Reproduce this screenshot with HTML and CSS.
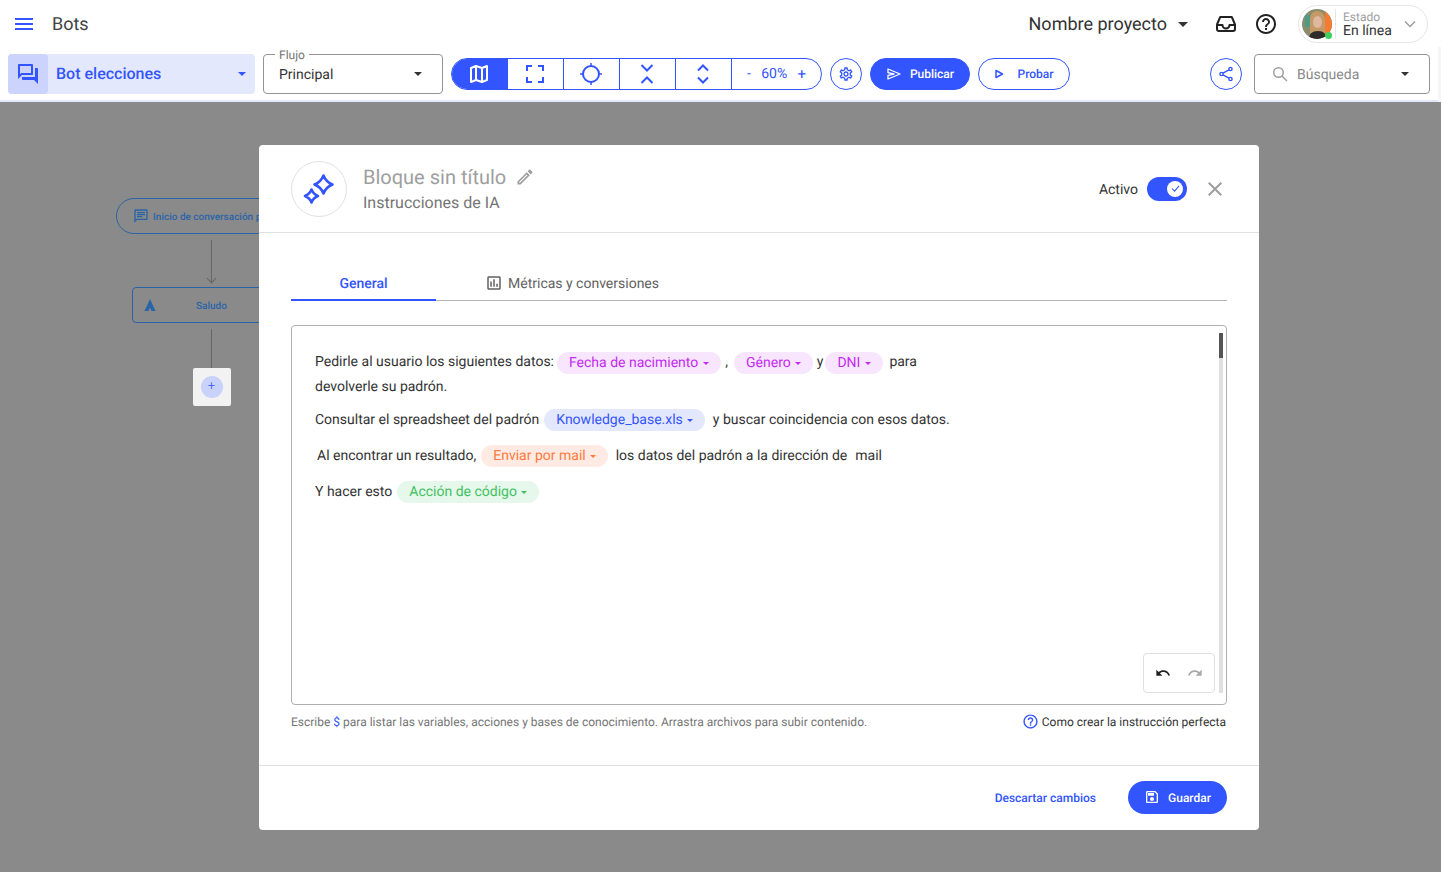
FILE: index.html
```html
<!DOCTYPE html>
<html lang="es">
<head>
    <meta charset="UTF-8" />
    <meta name="viewport" content="width=device-width, initial-scale=1" />
    <title>Bots - Bloque sin título</title>
    <link rel="stylesheet" href="styles.css">
</head>
<body>
<div class="topbar">
    <svg class="menu-icon" width="18" height="12" viewBox="0 0 18 12"><path d="M0 0h18v2H0zM0 5h18v2H0zM0 10h18v2H0z"/></svg>
    <div class="page-title">Bots</div>
    <div class="project">Nombre proyecto</div>
    <span class="caret project-caret"></span>
    <svg class="top-icon inbox" width="24" height="24" viewBox="0 0 24 24" fill="none" stroke="#222" stroke-width="2" stroke-linejoin="round"><path d="M6.200 5h11.600L21 12.500V17a2 2 0 0 1-2 2H5a2 2 0 0 1-2-2v-4.500zM3 13h5.500a3.500 3.500 0 0 0 7 0H21"/></svg>
    <svg class="top-icon help" width="24" height="24" viewBox="0 0 24 24" fill="#222"><path d="M11 18h2v-2h-2v2zm1-16C6.480 2 2 6.480 2 12s4.480 10 10 10 10-4.480 10-10S17.520 2 12 2zm0 18c-4.410 0-8-3.590-8-8s3.590-8 8-8 8 3.590 8 8-3.590 8-8 8zm0-14c-2.210 0-4 1.790-4 4h2c0-1.100.9-2 2-2s2 .9 2 2c0 2-3 1.750-3 5h2c0-2.250 3-2.500 3-5 0-2.210-1.790-4-4-4z"/></svg>
    <div class="status">
        <div class="avatar">
            <svg width="30" height="30" viewBox="0 0 30 30">
                <rect width="30" height="30" fill="#8a8d6c"/>
                <rect x="23" width="7" height="30" fill="#f47b32"/>
                <rect x="3" y="6" width="5" height="12" fill="#4f9a86"/>
                <path d="M8 24V11c0-6 3-9 7-9s8 3 8 9v13z" fill="#c49a66"/>
                <ellipse cx="15.500" cy="13" rx="4.500" ry="6" fill="#e0b8a0"/>
                <path d="M7 30c0-5 3-8 9-8s8 3 8 8z" fill="#2e2c2b"/>
            </svg>
            <span class="online-dot"></span>
        </div>
        <div class="status-text">
            <div class="status-label">Estado</div>
            <div class="status-value">En línea</div>
        </div>
        <svg class="status-chevron" width="12" height="8" viewBox="0 0 12 8" fill="none" stroke="#9e9e9e" stroke-width="1.500"><path d="M1 1.500l5 5 5-5"/></svg>
    </div>
</div>

<div class="toolbar">
    <div class="bot-select">
        <div class="bot-icon">
            <svg width="24" height="24" viewBox="0 0 24 24" fill="#3355ff"><path d="M15 4v7H5.170L4 12.170V4h11m1-2H3c-.55 0-1 .45-1 1v14l4-4h10c.55 0 1-.45 1-1V3c0-.55-.45-1-1-1zm5 4h-2v9H6v2c0 .55.45 1 1 1h11l4 4V7c0-.55-.45-1-1-1z"/></svg>
        </div>
        <div class="bot-name">Bot elecciones</div>
        <span class="caret caret-blue"></span>
    </div>
    <div class="field flow-field">
        <span class="field-legend">Flujo</span>
        <span class="field-value">Principal</span>
        <span class="caret"></span>
    </div>
    <div class="view-group">
        <div class="view-cell active">
            <svg width="20" height="20" viewBox="0 0 20 20" fill="none" stroke="#fff" stroke-width="2" stroke-linejoin="round"><path d="M2 4l5-2 6 2 5-2v14l-5 2-6-2-5 2zM7 2v14M13 4v14"/></svg>
        </div>
        <div class="view-cell">
            <svg width="20" height="20" viewBox="0 0 20 20" fill="none" stroke="#3355ff" stroke-width="2"><path d="M2 7V2h5M13 2h5v5M18 13v5h-5M7 18H2v-5"/></svg>
        </div>
        <div class="view-cell">
            <svg width="22" height="22" viewBox="0 0 22 22" fill="none" stroke="#3355ff" stroke-width="2"><circle cx="11" cy="11" r="8"/><path d="M11 0v4M11 18v4M0 11h4M18 11h4" stroke-width="1.500"/></svg>
        </div>
        <div class="view-cell">
            <svg width="14" height="20" viewBox="0 0 14 20" fill="none" stroke="#3355ff" stroke-width="2"><path d="M1.500 1l5.500 5.500L12.500 1M1.500 19L7 13.500l5.500 5.500"/></svg>
        </div>
        <div class="view-cell">
            <svg width="14" height="20" viewBox="0 0 14 20" fill="none" stroke="#3355ff" stroke-width="2"><path d="M2 6.500L7 1.500l5 5M2 13.500l5 5 5-5"/></svg>
        </div>
        <div class="zoom-cell"><span>-</span><span>60%</span><span class="zoom-plus">+</span></div>
    </div>
    <div class="round-btn">
        <svg width="16" height="16" viewBox="0 0 24 24" fill="#3355ff"><path d="M19.430 12.980c.04-.32.07-.64.07-.98 0-.34-.03-.66-.07-.98l2.110-1.650c.19-.15.24-.42.12-.64l-2-3.460c-.09-.16-.26-.25-.44-.25-.06 0-.12.01-.17.03l-2.490 1c-.52-.4-1.080-.73-1.690-.98l-.38-2.650C14.460 2.180 14.250 2 14 2h-4c-.25 0-.46.18-.49.42l-.38 2.650c-.61.25-1.170.59-1.690.98l-2.490-1c-.06-.02-.12-.03-.18-.03-.17 0-.34.09-.43.25l-2 3.460c-.13.22-.07.49.12.64l2.110 1.650c-.04.32-.07.65-.07.98 0 .33.03.66.07.98l-2.110 1.650c-.19.15-.24.42-.12.64l2 3.460c.09.16.26.25.44.25.06 0 .12-.01.17-.03l2.490-1c.52.4 1.080.73 1.690.98l.38 2.650c.03.24.24.42.49.42h4c.25 0 .46-.18.49-.42l.38-2.650c.61-.25 1.170-.59 1.690-.98l2.490 1c.06.02.12.03.18.03.17 0 .34-.09.43-.25l2-3.460c.12-.22.07-.49-.12-.64l-2.110-1.650zm-1.980-1.710c.04.31.05.52.05.73 0 .21-.02.43-.05.73l-.14 1.130.89.7 1.080.84-.7 1.210-1.270-.51-1.040-.42-.9.68c-.43.32-.84.56-1.250.73l-1.060.43-.16 1.130-.2 1.350h-1.400l-.19-1.350-.16-1.130-1.060-.43c-.43-.18-.83-.41-1.230-.71l-.91-.7-1.060.43-1.270.51-.7-1.210 1.080-.84.89-.7-.14-1.130c-.03-.31-.05-.54-.05-.74s.02-.43.05-.73l.14-1.130-.89-.7-1.080-.84.7-1.210 1.270.51 1.040.42.9-.68c.43-.32.84-.56 1.250-.73l1.060-.43.16-1.130.2-1.350h1.390l.19 1.350.16 1.130 1.060.43c.43.18.83.41 1.230.71l.91.7 1.060-.43 1.270-.51.7 1.210-1.070.85-.89.7.14 1.130zM12 8c-2.210 0-4 1.790-4 4s1.790 4 4 4 4-1.790 4-4-1.790-4-4-4zm0 6c-1.100 0-2-.9-2-2s.9-2 2-2 2 .9 2 2-.9 2-2 2z"/></svg>
    </div>
    <div class="pill-btn publish">
        <svg width="16" height="16" viewBox="0 0 24 24" fill="none" stroke="#fff" stroke-width="2" stroke-linejoin="round"><path d="M3 4.500L21 12 3 19.500V14l9-2-9-2z"/></svg>
        <span>Publicar</span>
    </div>
    <div class="pill-btn try">
        <svg width="10" height="10" viewBox="0 0 10 10" fill="none" stroke="#3355ff" stroke-width="1.500" stroke-linejoin="round"><path d="M2 1.500L8.500 5 2 8.500z"/></svg>
        <span>Probar</span>
    </div>
    <div class="round-btn share">
        <svg width="16" height="16" viewBox="0 0 16 16" fill="none" stroke="#3355ff" stroke-width="1.400"><circle cx="12.500" cy="3" r="1.600"/><circle cx="3.500" cy="8" r="1.600"/><circle cx="12.500" cy="13" r="1.600"/><path d="M5 7.200l6-3.400M5 8.800l6 3.400"/></svg>
    </div>
    <div class="field search-field">
        <svg width="16" height="16" viewBox="0 0 16 16" fill="none" stroke="#9e9e9e" stroke-width="1.500"><circle cx="6.500" cy="6.500" r="4.750"/><path d="M10 10l5 5"/></svg>
        <span class="field-value muted">Búsqueda</span>
        <span class="caret"></span>
    </div>
</div>

<div class="stage">
    <div class="node start-node">
        <svg width="16" height="16" viewBox="0 0 24 24" fill="#2a64a8"><path d="M20 2H4c-1.100 0-2 .9-2 2v18l4-4h14c1.100 0 2-.9 2-2V4c0-1.100-.9-2-2-2zm0 14H5.170L4 17.170V4h16v12zM6 12h8v2H6zm0-3h12v2H6zm0-3h12v2H6z"/></svg>
        <span>Inicio de conversación por defecto</span>
    </div>
    <div class="link link-one"></div>
    <div class="node greet-node">
        <svg width="14" height="14" viewBox="0 0 14 14" fill="#2a64a8"><path d="M7 1l5.500 12H8.500L7 9.500 5.500 13h-4z"/></svg>
        <span>Saludo</span>
    </div>
    <div class="link link-two"></div>
    <div class="add-box"><div class="add-dot">+</div></div>

    <div class="modal">
        <div class="modal-head">
            <div class="modal-logo">
                <svg width="32" height="32" viewBox="0 0 32 32" fill="none" stroke="#3355ff" stroke-width="2.600" stroke-linejoin="round"><path d="M20.500 2.500Q23 9 29.500 11.500 23 14 20.500 20.500 18 14 11.500 11.500 18 9 20.500 2.500zM8.500 16.500Q10.300 21.200 15 23 10.300 24.800 8.500 29.500 6.700 24.800 2 23 6.700 21.200 8.500 16.500z"/></svg>
            </div>
            <div class="modal-titles">
                <div class="modal-title">Bloque sin título
                    <svg width="20" height="20" viewBox="0 0 24 24" fill="#9e9e9e"><path d="M14.060 9.020l.92.92L5.920 19H5v-.92l9.060-9.060M17.660 3c-.25 0-.51.1-.7.29l-1.830 1.830 3.750 3.750 1.830-1.830c.39-.39.39-1.020 0-1.410l-2.340-2.340c-.2-.2-.45-.29-.71-.29zm-3.600 3.190L3 17.250V21h3.750L17.810 9.940l-3.750-3.750z"/></svg>
                </div>
                <div class="modal-sub">Instrucciones de IA</div>
            </div>
            <div class="active-label">Activo</div>
            <div class="toggle">
                <div class="toggle-knob">
                    <svg width="9" height="7" viewBox="0 0 10 8" fill="none" stroke="#3355ff" stroke-width="1.200"><path d="M1 4l3 3 5-6"/></svg>
                </div>
            </div>
            <svg class="close-icon" width="24" height="24" viewBox="0 0 24 24" fill="#9e9e9e"><path d="M19 6.410L17.590 5 12 10.590 6.410 5 5 6.410 10.590 12 5 17.590 6.410 19 12 13.410 17.590 19 19 17.590 13.410 12z"/></svg>
        </div>

        <div class="modal-body">
            <div class="tabs">
                <div class="tab active">General</div>
                <div class="tab">
                    <svg width="18" height="18" viewBox="0 0 24 24" fill="#616161"><path d="M19 3H5c-1.100 0-2 .9-2 2v14c0 1.100.9 2 2 2h14c1.100 0 2-.9 2-2V5c0-1.100-.9-2-2-2zm0 16H5V5h14v14zM7 10h2v7H7zm4-3h2v10h-2zm4 6h2v4h-2z"/></svg>
                    <span class="tab-label">Métricas y conversiones</span>
                </div>
            </div>

            <div class="editor">
                <p class="line line-first">Pedirle al usuario los siguientes datos:<span class="chip chip-pink chip-fecha">Fecha de nacimiento<i class="chip-caret"></i></span><span class="gap-comma">,</span><span class="chip chip-pink chip-genero">Género<i class="chip-caret"></i></span><span class="gap-y">y</span><span class="chip chip-pink chip-dni">DNI<i class="chip-caret"></i></span><span class="gap-para">para</span><br>devolverle su padrón.</p>
                <p class="line line-second">Consultar el spreadsheet del padrón<span class="chip chip-blue chip-know">Knowledge_base.xls<i class="chip-caret"></i></span><span class="gap-after">y buscar coincidencia con esos datos.</span></p>
                <p class="line line-third">Al encontrar un resultado,<span class="chip chip-orange chip-mail">Enviar por mail<i class="chip-caret"></i></span><span class="gap-after">los datos del padrón a la dirección de</span><span class="gap-mail">mail</span></p>
                <p class="line line-third line-last">Y hacer esto<span class="chip chip-green chip-code">Acción de código<i class="chip-caret"></i></span></p>

                <div class="editor-scroll"><div class="editor-thumb"></div></div>
                <div class="history">
                    <svg width="16" height="16" viewBox="0 0 24 24" fill="#222"><path d="M12.500 8c-2.650 0-5.050.99-6.900 2.600L2 7v9h9l-3.620-3.620c1.390-1.160 3.160-1.880 5.120-1.880 3.540 0 6.550 2.310 7.600 5.500l2.370-.78C21.080 11.030 17.150 8 12.500 8z"/></svg>
                    <svg width="16" height="16" viewBox="0 0 24 24" fill="#a8a8a8"><path d="M18.400 10.600C16.550 8.990 14.150 8 11.500 8c-4.650 0-8.580 3.030-9.960 7.220L3.900 16c1.050-3.190 4.050-5.500 7.600-5.500 1.950 0 3.730.72 5.120 1.880L13 16h9V7l-3.600 3.600z"/></svg>
                </div>
            </div>

            <div class="hints">
                <div class="hint">Escribe <span class="hint-key">$</span> para listar las variables, acciones y bases de conocimiento. Arrastra archivos para subir contenido.</div>
                <div class="hint-link">
                    <svg width="17" height="17" viewBox="0 0 24 24" fill="#3355ff"><path d="M11 18h2v-2h-2v2zm1-16C6.480 2 2 6.480 2 12s4.480 10 10 10 10-4.480 10-10S17.520 2 12 2zm0 18c-4.410 0-8-3.590-8-8s3.590-8 8-8 8 3.590 8 8-3.590 8-8 8zm0-14c-2.210 0-4 1.790-4 4h2c0-1.100.9-2 2-2s2 .9 2 2c0 2-3 1.750-3 5h2c0-2.250 3-2.500 3-5 0-2.210-1.790-4-4-4z"/></svg>
                    Como crear la instrucción perfecta
                </div>
            </div>
        </div>

        <div class="modal-foot">
            <div class="discard">Descartar cambios</div>
            <div class="save-btn">
                <svg width="16" height="16" viewBox="0 0 24 24" fill="#fff"><path d="M17 3H5c-1.110 0-2 .9-2 2v14c0 1.100.89 2 2 2h14c1.100 0 2-.9 2-2V7l-4-4zm2 16H5V5h11.170L19 7.830V19zm-7-7c-1.660 0-3 1.340-3 3s1.340 3 3 3 3-1.340 3-3-1.340-3-3-3zM6 6h9v4H6z"/></svg>
                <span class="save-label">Guardar</span>
            </div>
        </div>
    </div>
</div>
</body>
</html>
```

FILE: styles.css
```css
* {
  box-sizing: border-box;
}
html, body {
  height: 100%;
}
body {
  margin: 0;
  display: flex;
  flex-direction: column;
  overflow: hidden;
  font-family: Roboto, 'Liberation Sans', sans-serif;
  font-size: 14px;
  color: #333;
  background: #fff;
  text-rendering: geometricPrecision;
}
svg {
  flex: none;
}

/* top bar */
.topbar {
  height: 48px;
  display: flex;
  align-items: center;
  padding: 0 13px 0 15px;
}
.menu-icon {
  fill: #3355ff;
}
.page-title {
  margin-left: 19px;
  font-size: 18px;
  color: #424242;
}
.project {
  margin-left: auto;
  font-size: 18px;
  color: #333;
}
.caret {
  width: 0;
  height: 0;
  flex: none;
  border-left: 4.5px solid transparent;
  border-right: 4.5px solid transparent;
  border-top: 4.5px solid #333;
}
.caret-blue {
  border-top-color: #3355ff;
}
.project-caret {
  margin-left: 11px;
  border-left-width: 5px;
  border-right-width: 5px;
  border-top-width: 5px;
}
.inbox {
  margin-left: 26px;
}
.help {
  margin-left: 16px;
}
.status {
  width: 130px;
  height: 38px;
  margin-left: 20px;
  display: flex;
  align-items: center;
  padding: 0 11px 0 3px;
  border: 1px solid #e6e6e6;
  border-radius: 19px;
}
.avatar {
  position: relative;
  width: 30px;
  height: 30px;
  flex: none;
}
.avatar svg {
  display: block;
  border-radius: 50%;
}
.online-dot {
  position: absolute;
  right: 0;
  bottom: 0;
  width: 7px;
  height: 7px;
  border-radius: 50%;
  background: #3ecf5e;
}
.status-text {
  margin-left: 3px;
  padding: 2px 0 0 7px;
  border-left: 1px solid #e6e6e6;
  flex: 1;
}
.status-label {
  font-size: 12px;
  line-height: 13px;
  color: #9e9e9e;
}
.status-value {
  font-size: 14px;
  line-height: 15px;
  color: #333;
}

/* toolbar */
.toolbar {
  position: relative;
  height: 54px;
  flex: none;
  display: flex;
  align-items: center;
  gap: 8px;
  padding: 0 11px 0 8px;
  border-bottom: 2px solid #e4e8fd;
}
.toolbar::after {
  content: "";
  position: absolute;
  top: -1px;
  right: 0;
  bottom: -2px;
  width: 3px;
  background: #f5f5f5;
}
.bot-select {
  width: 247px;
  height: 40px;
  display: flex;
  align-items: center;
  padding-right: 9.5px;
  border-radius: 4px;
  background: #e4e8fd;
}
.bot-icon {
  width: 40px;
  height: 40px;
  display: flex;
  align-items: center;
  justify-content: center;
  border-radius: 4px;
  background: #ccd4fd;
}
.bot-name {
  flex: 1;
  margin-left: 8px;
  margin-bottom: 2px;
  font-size: 16px;
  font-weight: 500;
  color: #3355ff;
}
.field {
  position: relative;
  height: 40px;
  display: flex;
  align-items: center;
  border: 1px solid #949494;
  border-radius: 4px;
}
.flow-field {
  width: 180px;
  padding: 0 20.5px 0 15px;
}
.field-legend {
  position: absolute;
  top: -6px;
  left: 11px;
  padding: 0 4px;
  font-size: 12px;
  line-height: 13px;
  color: #757575;
  background: #fff;
}
.field-value {
  flex: 1;
  padding-top: 2px;
  color: #333;
}
.field-value.muted {
  margin-left: 9px;
  color: #8a8a8a;
}
.view-group {
  width: 371px;
  height: 32px;
  display: flex;
  overflow: hidden;
  border: 1px solid #3355ff;
  border-radius: 16px;
}
.view-cell {
  width: 56px;
  flex: none;
  display: flex;
  align-items: center;
  justify-content: center;
  padding-right: 2px;
  border-right: 1px solid #3355ff;
}
.view-cell.active {
  background: #3355ff;
}
.zoom-cell {
  flex: 1;
  display: flex;
  align-items: center;
  padding: 0 15px;
  justify-content: space-between;
  color: #3355ff;
}
.zoom-plus {
  font-size: 15px;
}
.round-btn {
  width: 32px;
  height: 32px;
  flex: none;
  display: flex;
  align-items: center;
  justify-content: center;
  border: 1px solid #3355ff;
  border-radius: 50%;
}
.pill-btn {
  height: 32px;
  display: flex;
  align-items: center;
  justify-content: center;
  border: 1px solid #3355ff;
  border-radius: 16px;
  font-size: 12px;
  font-weight: 500;
}
.publish {
  width: 100px;
  gap: 8px;
  background: #3355ff;
  color: #fff;
}
.try {
  width: 92px;
  gap: 13px;
  color: #3355ff;
}
.share {
  margin-left: auto;
  margin-right: 4px;
}
.search-field {
  width: 176px;
  padding: 0 20.5px 0 17px;
}

/* canvas behind the dialog */
.stage {
  position: relative;
  flex: 1;
  background: #8a8a8a;
}
.node {
  position: absolute;
  display: flex;
  align-items: center;
  border: 1px solid #2a64a8;
  color: #2a64a8;
  font-size: 10px;
  font-weight: 500;
  white-space: nowrap;
}
.node span {
  padding-top: 2px;
}
.start-node {
  left: 116px;
  top: 96px;
  width: 240px;
  height: 36px;
  padding-left: 16px;
  gap: 4px;
  border-radius: 18px;
}
.greet-node {
  left: 132px;
  top: 185px;
  width: 159px;
  height: 36px;
  padding-left: 10px;
  border-radius: 4px;
}
.greet-node span {
  margin-left: 39px;
}
.link {
  position: absolute;
  left: 211px;
  width: 1px;
  background: #666;
}
.link-one {
  top: 138px;
  height: 43px;
}
.link-two {
  top: 227px;
  height: 42px;
}
.link-one::after {
  content: "";
  position: absolute;
  left: -3px;
  bottom: 1px;
  width: 6px;
  height: 6px;
  border-right: 1px solid #666;
  border-bottom: 1px solid #666;
  transform: rotate(45deg);
}
.add-box {
  position: absolute;
  left: 193px;
  top: 266px;
  width: 38px;
  height: 38px;
  display: flex;
  align-items: center;
  justify-content: center;
  border-radius: 2px;
  background: #f2f2f2;
}
.add-dot {
  width: 22px;
  height: 22px;
  padding-right: 1px;
  border-radius: 50%;
  background: #c9d2fb;
  color: #3355ff;
  font-size: 13px;
  font-weight: 300;
  line-height: 22px;
  text-align: center;
}

/* dialog */
.modal {
  position: absolute;
  left: 259px;
  top: 43px;
  width: 1000px;
  height: 685px;
  display: flex;
  flex-direction: column;
  border-radius: 4px;
  background: #fff;
}
.modal-head {
  height: 88px;
  flex: none;
  display: flex;
  align-items: center;
  padding: 0 32px;
  border-bottom: 1px solid #e0e0e0;
}
.modal-logo {
  width: 56px;
  height: 56px;
  display: flex;
  align-items: center;
  justify-content: center;
  border: 1px solid #e0e0e0;
  border-radius: 50%;
}
.modal-titles {
  flex: 1;
  margin-left: 16px;
}
.modal-title {
  display: flex;
  align-items: center;
  gap: 9px;
  font-size: 20px;
  line-height: 24px;
  color: #9e9e9e;
}
.modal-sub {
  margin-top: 4px;
  font-size: 16px;
  line-height: 20px;
  color: #757575;
}
.active-label {
  padding-top: 2px;
  color: #333;
}
.toggle {
  width: 40px;
  height: 24px;
  margin-left: 9px;
  display: flex;
  align-items: center;
  justify-content: flex-end;
  padding-right: 4px;
  border-radius: 12px;
  background: #3355ff;
}
.toggle-knob {
  width: 16px;
  height: 16px;
  display: flex;
  align-items: center;
  justify-content: center;
  border-radius: 50%;
  background: #fff;
}
.close-icon {
  margin-left: 16px;
}
.modal-body {
  flex: 1;
  padding: 32px 32px 0;
}
.tabs {
  height: 36px;
  display: flex;
  border-bottom: 1px solid #b5b5b5;
}
.tab {
  width: 145px;
  height: 36px;
  display: flex;
  align-items: center;
  justify-content: center;
  gap: 5px;
  color: #616161;
}
.tab + .tab {
  width: auto;
  margin-left: 49px;
}
.tab-label {
  padding-top: 2px;
}
.tab.active {
  padding-top: 4px;
  font-weight: 500;
  color: #3355ff;
  border-bottom: 2px solid #3355ff;
}
.editor {
  position: relative;
  height: 380px;
  margin-top: 24px;
  padding: 24px 24px 0 23px;
  border: 1px solid #b0b0b0;
  border-radius: 4px;
}
.line {
  margin: 0;
  line-height: 25px;
  color: #333;
  white-space: nowrap;
}
.line-first .chip {
  position: relative;
  top: 1px;
}
.line-second {
  margin-top: 8px;
}
.line-third {
  margin-top: 11px;
}
.line-third:not(.line-last) {
  padding-left: 2px;
}
.chip {
  display: inline-block;
  height: 22px;
  padding: 0 12px;
  border-radius: 11px;
  line-height: 22px;
}
.chip-caret {
  display: inline-block;
  margin-left: 4px;
  vertical-align: middle;
  border-left: 3px solid transparent;
  border-right: 3px solid transparent;
  border-top: 3px solid currentColor;
}
.chip-fecha .chip-caret,
.chip-dni .chip-caret {
  margin-left: 5px;
}
.chip-pink {
  background: #f7e6fe;
  color: #c42bf0;
}
.chip-blue {
  background: #e4e8fd;
  color: #3355ff;
}
.chip-orange {
  background: #ffebe3;
  color: #ff7a3d;
}
.chip-green {
  background: #e6f7ec;
  color: #43c25f;
}
.chip-fecha {
  margin-left: 3px;
}
.gap-comma {
  margin-left: 4px;
}
.chip-genero {
  margin-left: 6px;
}
.gap-y {
  margin-left: 4px;
}
.chip-dni {
  margin-left: 2px;
}
.gap-para {
  margin-left: 6px;
}
.chip-know {
  margin-left: 5px;
}
.gap-after {
  margin-left: 8px;
}
.chip-mail {
  margin-left: 5px;
}
.gap-mail {
  margin-left: 8px;
}
.chip-code {
  margin-left: 5px;
}
.editor-scroll {
  position: absolute;
  right: 3px;
  top: 7px;
  bottom: 11px;
  width: 4px;
  background: #e0e0e0;
}
.editor-thumb {
  height: 25px;
  background: #555;
}
.history {
  position: absolute;
  right: 11px;
  bottom: 11px;
  width: 72px;
  height: 40px;
  display: flex;
  align-items: center;
  justify-content: center;
  gap: 16px;
  border: 1px solid #e0e0e0;
  border-radius: 4px;
}
.hints {
  margin-top: 8px;
  display: flex;
  align-items: center;
  justify-content: space-between;
  font-size: 12px;
}
.hint {
  color: #757575;
}
.hint-key {
  color: #3355ff;
}
.hint-link {
  display: flex;
  align-items: center;
  gap: 3px;
  margin-right: 1px;
  color: #333;
}
.modal-foot {
  height: 65px;
  flex: none;
  display: flex;
  align-items: center;
  justify-content: flex-end;
  padding: 0 32px;
  border-top: 1px solid #e0e0e0;
}
.discard {
  font-size: 12px;
  font-weight: 500;
  color: #3355ff;
}
.save-btn {
  width: 99px;
  height: 33px;
  margin-left: 32px;
  margin-bottom: 2px;
  display: flex;
  align-items: center;
  justify-content: center;
  gap: 8px;
  border-radius: 17px;
  background: #3355ff;
  color: #fff;
  font-size: 12px;
  font-weight: 500;
}
.save-label {
  padding-top: 2px;
}
```
